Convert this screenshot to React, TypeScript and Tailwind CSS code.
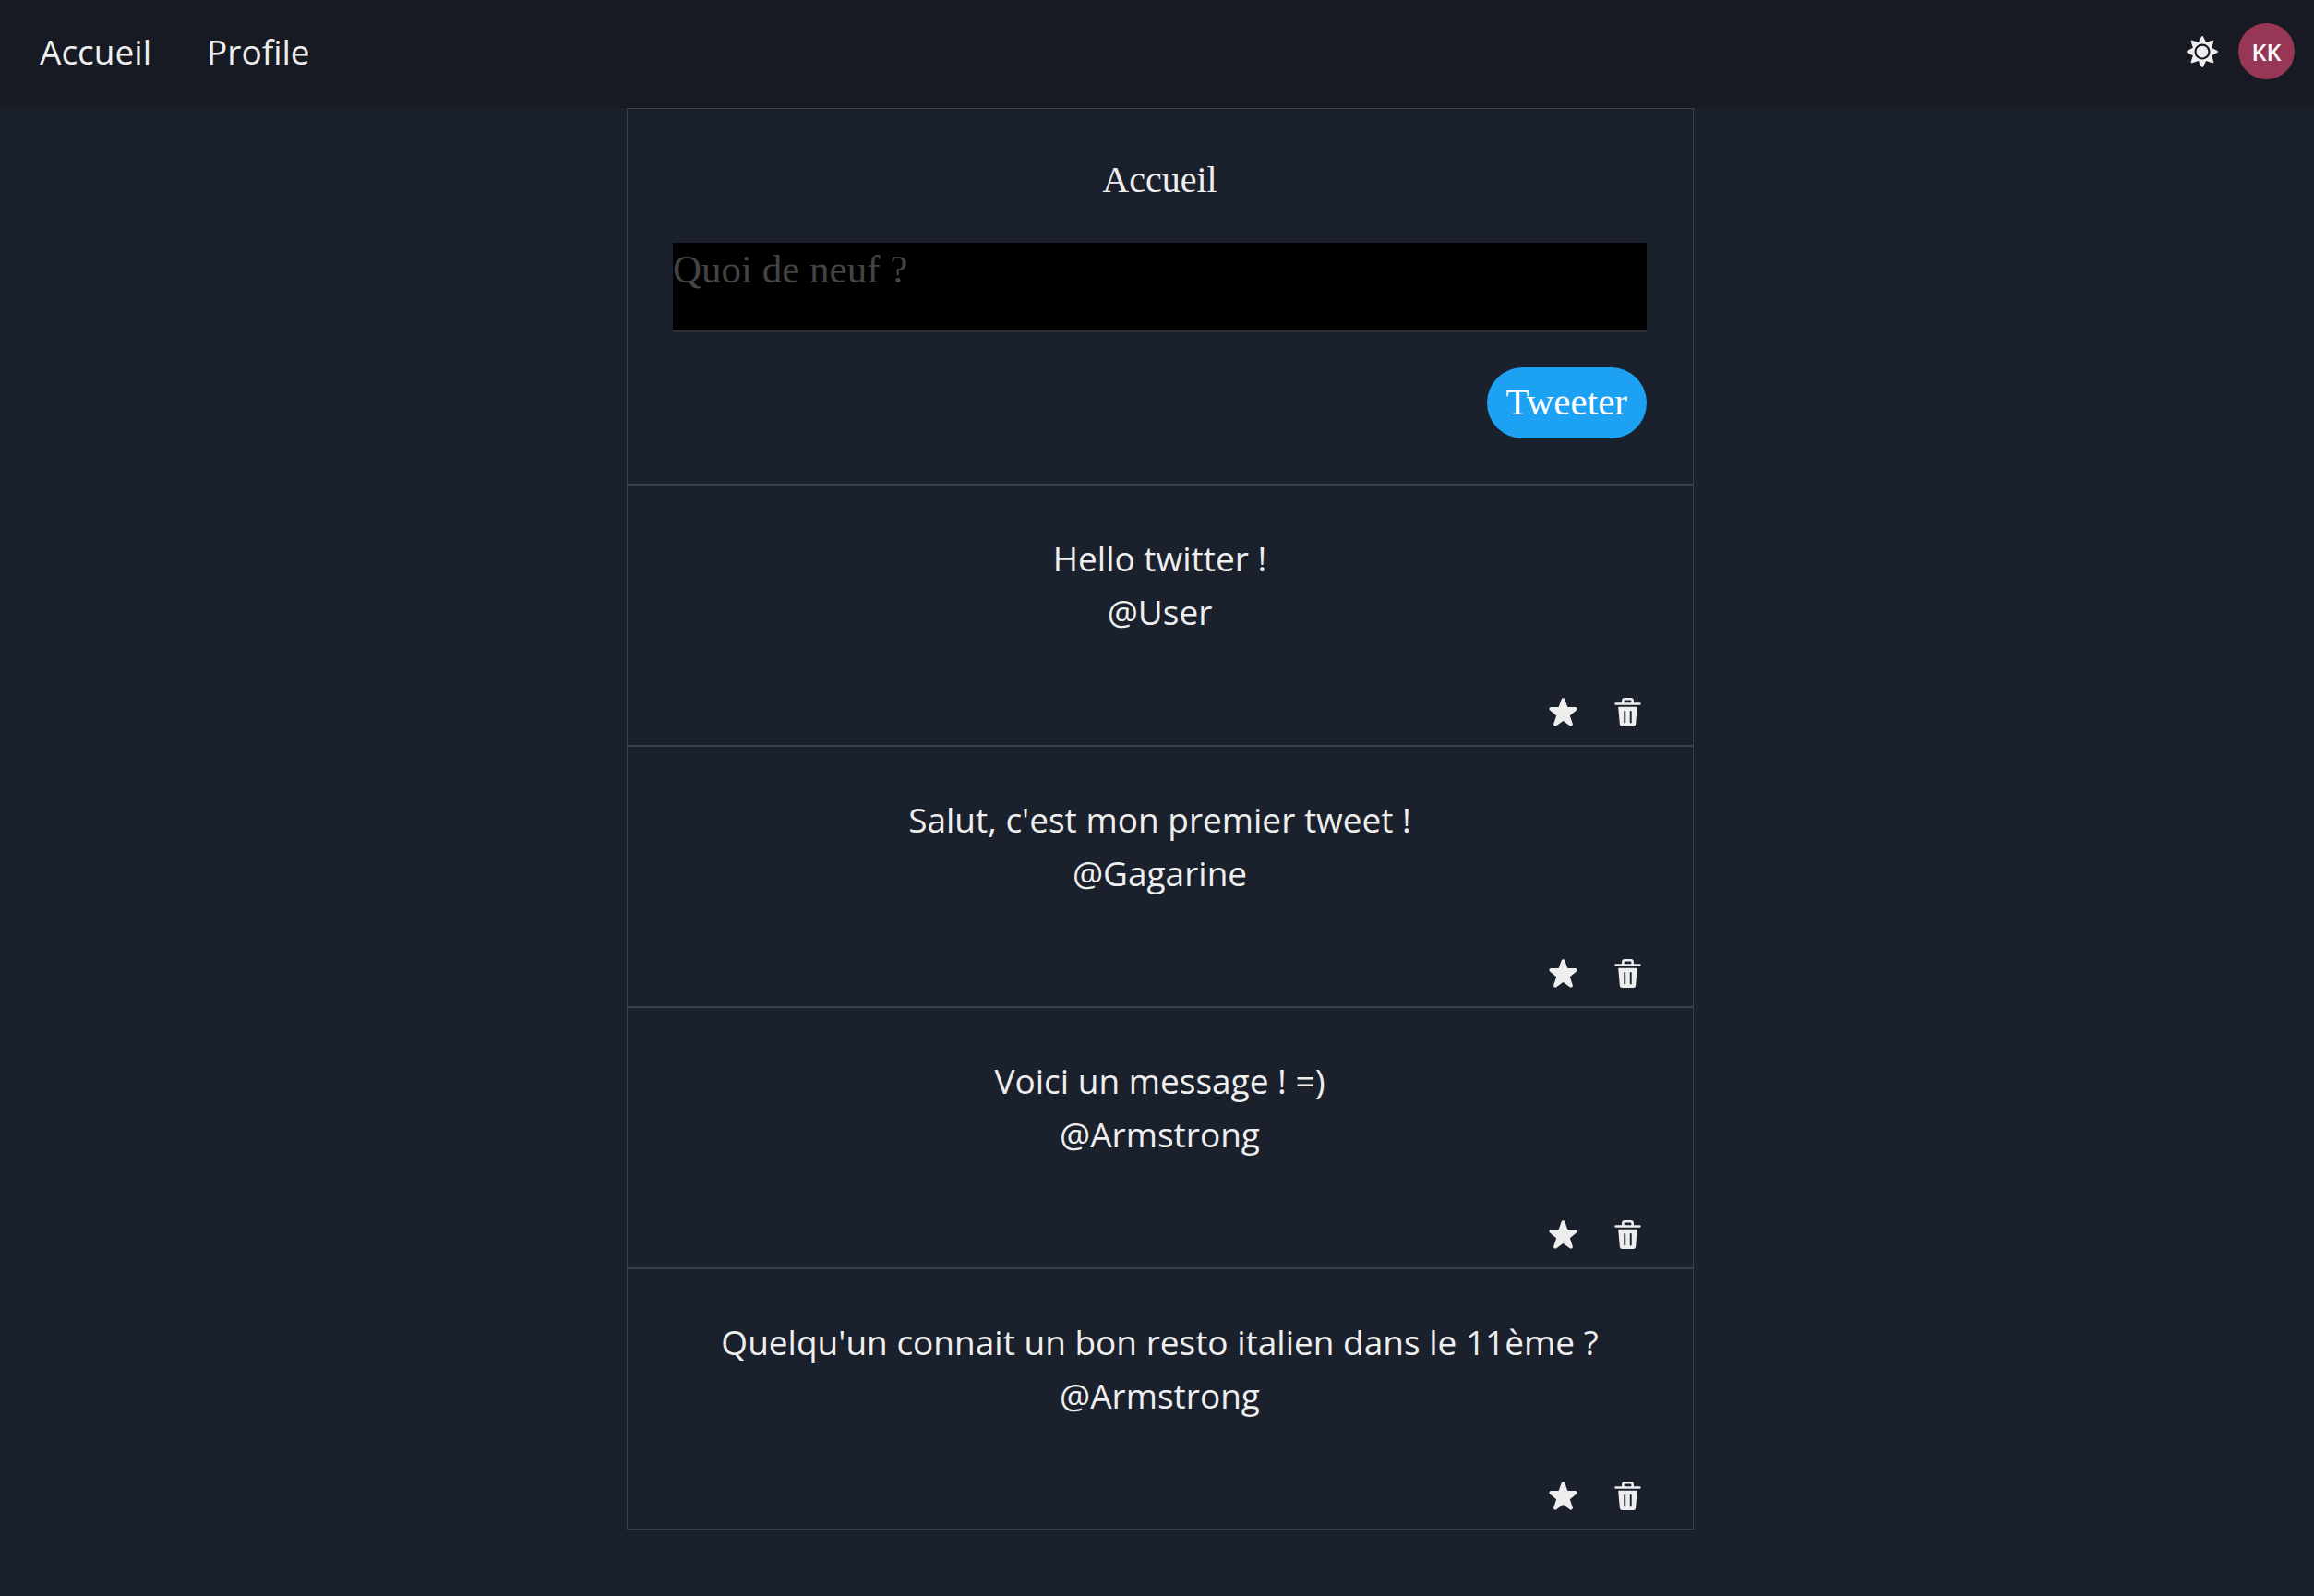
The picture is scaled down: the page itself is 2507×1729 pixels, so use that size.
import { FaSun } from 'react-icons/fa';

type Tweet = { id: number; message: string; author: string };

const tweets: Tweet[] = [
  { id: 1, message: 'Hello twitter !', author: '@User' },
  { id: 2, message: "Salut, c'est mon premier tweet !", author: '@Gagarine' },
  { id: 3, message: 'Voici un message ! =)', author: '@Armstrong' },
  { id: 4, message: "Quelqu'un connait un bon resto italien dans le 11ème ?", author: '@Armstrong' },
];

function StarIcon() {
  return (
    <svg viewBox="0 0 24 24" className="size-[31px]" fill="currentColor" aria-hidden="true">
      <path d="M23.555,8.729a1.505,1.505,0,0,0-1.406-.98H16.062a.5.5,0,0,1-.472-.334L13.405,1.222a1.5,1.5,0,0,0-2.81,0l-.005.016L8.41,7.415a.5.5,0,0,1-.471.334H1.85A1.5,1.5,0,0,0,.887,10.4l5.184,4.3a.5.5,0,0,1,.155.543L4.048,21.774a1.5,1.5,0,0,0,2.31,1.684l5.346-3.92a.5.5,0,0,1,.591,0l5.344,3.919a1.5,1.5,0,0,0,2.312-1.683l-2.178-6.535a.5.5,0,0,1,.155-.543l5.194-4.306A1.5,1.5,0,0,0,23.555,8.729Z" />
    </svg>
  );
}

function TrashIcon() {
  return (
    <svg viewBox="0 0 24 24" className="size-[31px]" fill="currentColor" aria-hidden="true">
      <path d="M19.452 7.5H4.547a.5.5 0 00-.5.545l1.287 14.136A2 2 0 007.326 24h9.347a2 2 0 001.992-1.819L19.95 8.045a.5.5 0 00-.129-.382.5.5 0 00-.369-.163zm-9.2 13a.75.75 0 01-1.5 0v-9a.75.75 0 011.5 0zm5 0a.75.75 0 01-1.5 0v-9a.75.75 0 011.5 0zM22 4h-4.75a.25.25 0 01-.25-.25V2.5A2.5 2.5 0 0014.5 0h-5A2.5 2.5 0 007 2.5v1.25a.25.25 0 01-.25.25H2a1 1 0 000 2h20a1 1 0 000-2zM9 3.75V2.5a.5.5 0 01.5-.5h5a.5.5 0 01.5.5v1.25a.25.25 0 01-.25.25h-5.5A.25.25 0 019 3.75z" />
    </svg>
  );
}

function Header() {
  return (
    <header className="flex h-[117px] items-center justify-between bg-[#171923] pb-1.5 pl-[43px] pr-[21px]">
      <nav className="flex gap-[60px]">
        <a href="#accueil">Accueil</a>
        <a href="#profile">Profile</a>
      </nav>
      <div className="flex items-center gap-[22px]">
        <button type="button" aria-label="Changer de thème">
          <FaSun className="size-[34px]" />
        </button>
        <div className="flex size-[61px] items-center justify-center rounded-full bg-[#973655] text-[25px] font-semibold text-white">
          KK
        </div>
      </div>
    </header>
  );
}

function TweetForm() {
  return (
    <form
      className="flex flex-col border border-[#3a404b] pb-[49px] pl-[49px] pr-[50px] pt-12 font-['Liberation_Serif',serif]"
      onSubmit={(e) => e.preventDefault()}
    >
      <h1 className="text-center text-[40px] leading-[58px]">Accueil</h1>
      <textarea
        aria-label="Quoi de neuf ?"
        placeholder="Quoi de neuf ?"
        className="mt-[39px] block h-[97px] w-full resize-none border-b-2 border-[#2b2f36] bg-black text-[43px] leading-[58px] outline-none placeholder:text-[#444444]"
      />
      <button
        type="submit"
        className="mt-[38px] h-[77px] self-end rounded-full bg-[#1da1f2] px-[21px] pb-1 text-[41px] leading-[58px] text-white"
      >
        Tweeter
      </button>
    </form>
  );
}

function TweetCard({ message, author }: Tweet) {
  return (
    <li className="flex flex-col border border-[#3a404b] pb-5 pl-[49px] pr-[50px] pt-[50px]">
      <p className="text-center">{message}</p>
      <p className="text-center">{author}</p>
      <div className="mt-16 flex justify-end gap-[39px] pr-[5px]">
        <button type="button" aria-label="Ajouter aux favoris">
          <StarIcon />
        </button>
        <button type="button" aria-label="Supprimer">
          <TrashIcon />
        </button>
      </div>
    </li>
  );
}

export default function App() {
  return (
    <div className="min-h-screen bg-[#1a202c] font-['Open_Sans',sans-serif] text-[37px] leading-[58px] text-[#eeeeee]">
      <Header />
      <main className="pl-[7px]">
        <div className="mx-auto max-w-[1156px]">
          <TweetForm />
          <ul>
            {tweets.map((t) => (
              <TweetCard key={t.id} {...t} />
            ))}
          </ul>
        </div>
      </main>
    </div>
  );
}
